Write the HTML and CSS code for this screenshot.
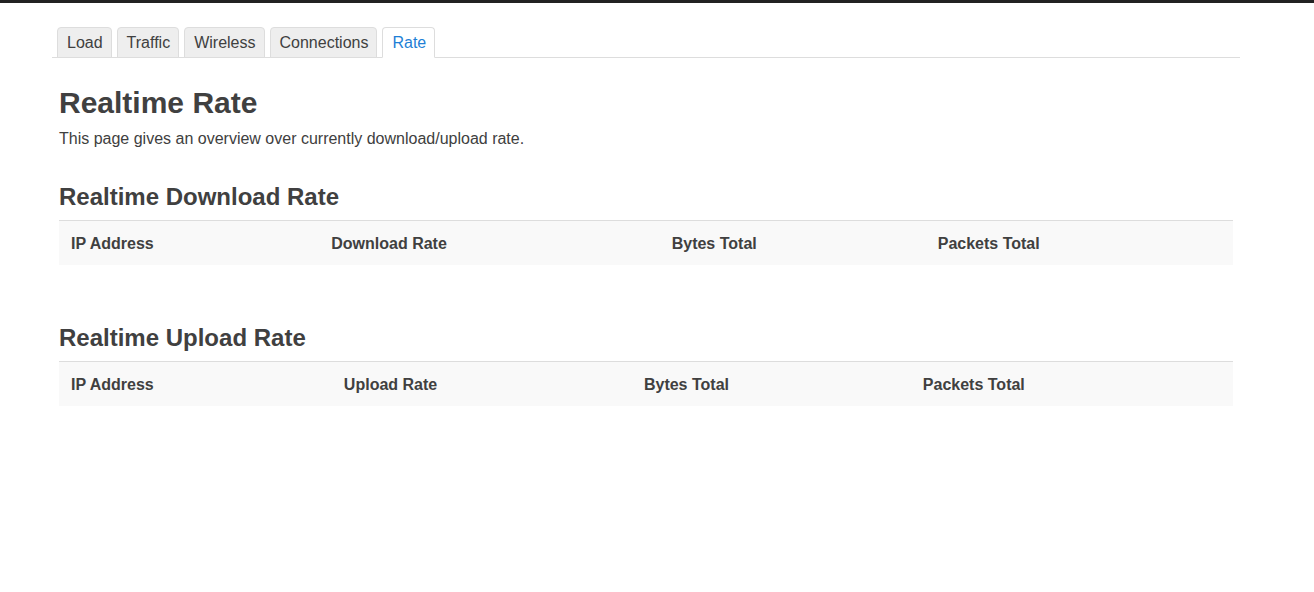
FILE: index.html
```html
<!DOCTYPE html>
<html>
<head>
<meta charset="utf-8">
<link rel="stylesheet" href="styles.css">
</head>
<body>
<div class="topbar"></div>
<div class="container">
  <ul class="tabs">
    <li class="tab"><a href="#">Load</a></li>
    <li class="tab"><a href="#">Traffic</a></li>
    <li class="tab"><a href="#">Wireless</a></li>
    <li class="tab"><a href="#">Connections</a></li>
    <li class="tab active"><a href="#">Rate</a></li>
  </ul>
  <div class="content">
    <h2 class="title">Realtime Rate</h2>
    <p class="desc">This page gives an overview over currently download/upload rate.</p>

    <h3 class="section">Realtime Download Rate</h3>
    <table class="rates">
      <tr>
        <th>IP Address</th>
        <th>Download Rate</th>
        <th>Bytes Total</th>
        <th>Packets Total</th>
      </tr>
    </table>

    <h3 class="section">Realtime Upload Rate</h3>
    <table class="rates">
      <tr>
        <th>IP Address</th>
        <th>Upload Rate</th>
        <th>Bytes Total</th>
        <th>Packets Total</th>
      </tr>
    </table>
  </div>
</div>
</body>
</html>
```

FILE: styles.css
```css
html, body {
  margin: 0;
  padding: 0;
  background: #fff;
  font-family: "Liberation Sans", Arial, sans-serif;
  color: #404040;
}
.topbar {
  height: 3px;
  background: #222;
}
.container {
  width: 1188px;
  margin-left: 52px;
}
.tabs {
  list-style: none;
  margin: 24px 0 0 0;
  padding: 0 0 0 5px;
  display: flex;
  gap: 5px;
  border-bottom: 1px solid #ddd;
}
.tab {
  margin-bottom: -1px;
}
.tab a {
  display: block;
  padding: 1px 8px 0 9px;
  line-height: 28px;
  font-size: 16px;
  color: #404040;
  text-decoration: none;
  background: #eee;
  border: 1px solid #ddd;
  border-radius: 4px 4px 0 0;
}
.tab.active a {
  background: #fff;
  color: #1e7fd6;
  border-bottom-color: #fff;
}
.content {
  padding: 0 7px;
}
.title {
  font-size: 30px;
  font-weight: bold;
  color: #404040;
  margin: 27px 0 0 0;
  line-height: 36px;
}
.desc {
  font-size: 16px;
  margin: 7px 0 0 0;
  line-height: 22px;
  color: #404040;
}
.section {
  font-size: 24px;
  font-weight: bold;
  margin: 32px 0 8px 0;
  line-height: 30px;
  color: #404040;
}
.rates {
  width: 100%;
  border-collapse: collapse;
  border-top: 1px solid #ddd;
}
.rates + .section {
  margin-top: 58px;
}
.rates th {
  background: #f9f9f9;
  text-align: left;
  font-size: 16px;
  font-weight: bold;
  padding: 14px 12px 12px 12px;
  line-height: 18px;
  color: #404040;
}
```
